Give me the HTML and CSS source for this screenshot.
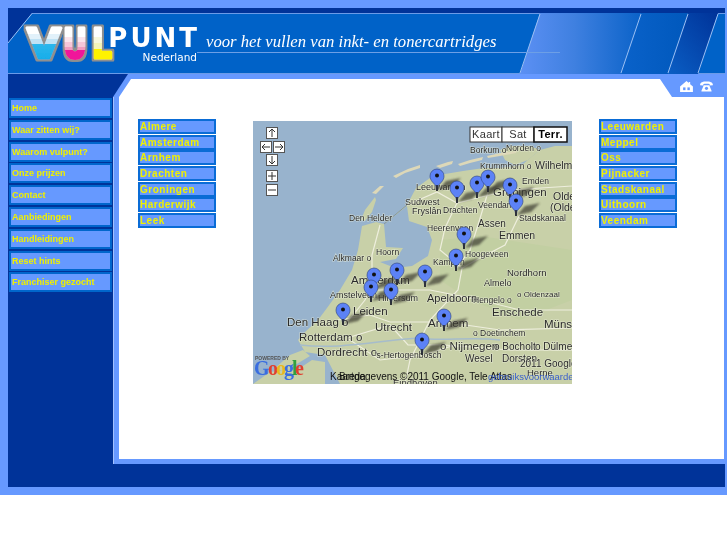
FILE: index.html
```html
<!DOCTYPE html>
<html lang="nl">
<head>
<meta charset="utf-8">
<title>Vulpunt Nederland</title>
<link rel="stylesheet" href="styles.css">
</head>
<body>
<div class="page">
  <div class="frame">
    <header class="header">
      <svg class="banner" viewBox="8 13 717 61" preserveAspectRatio="none" aria-hidden="true">
        <defs>
          <linearGradient id="p1" x1="0" x2="1" y1="0" y2="0"><stop offset="0" stop-color="#5c90f4"/><stop offset=".45" stop-color="#3f80e0"/><stop offset="1" stop-color="#0a62c8"/></linearGradient>
          <linearGradient id="p3" x1="0" x2="1" y1="1" y2="0"><stop offset="0" stop-color="#0a5ec4"/><stop offset="1" stop-color="#003399"/></linearGradient>
          <linearGradient id="p2" x1="0" x2="1" y1="0" y2="0"><stop offset="0" stop-color="#0a62ca"/><stop offset="1" stop-color="#0058bc"/></linearGradient>
        </defs>
        <polygon points="540,13 641,13 621,74 520,74" fill="url(#p1)"/>
        <polygon points="641,13 688,13 668,74 621,74" fill="url(#p2)"/>
        <polygon points="688,13 718,13 698,74 668,74" fill="url(#p3)"/>
        <polygon points="8,13 32,13 8,43" fill="#003399"/>
        <g stroke="#9cc0f4" stroke-width="1" fill="none">
          <path d="M8 43 L32 13.500"/>
          <path d="M540 14 L520 73"/><path d="M641 14 L621 73"/><path d="M688 14 L668 73"/><path d="M718 14 L698 73"/>
          <path d="M197 52.500 H560" stroke="#6d9fe6"/>
        </g>
      </svg>
      <div class="brand">
        <svg class="vul" viewBox="0 0 90 36" role="img" aria-label="VUL">
          <defs>
            <linearGradient id="gv" gradientUnits="userSpaceOnUse" x1="0" x2="0" y1="2" y2="33"><stop offset="0" stop-color="#fff"/><stop offset=".2" stop-color="#fff"/><stop offset=".2" stop-color="#e2f1fa"/><stop offset=".36" stop-color="#e2f1fa"/><stop offset=".36" stop-color="#bfe2f5"/><stop offset=".52" stop-color="#bfe2f5"/><stop offset=".52" stop-color="#2bb6ec"/><stop offset="1" stop-color="#18aeea"/></linearGradient>
            <linearGradient id="gu" gradientUnits="userSpaceOnUse" x1="0" x2="0" y1="2" y2="33"><stop offset="0" stop-color="#fff"/><stop offset=".3" stop-color="#fff"/><stop offset=".3" stop-color="#fbe4ec"/><stop offset=".46" stop-color="#fbe4ec"/><stop offset=".46" stop-color="#f6c6d8"/><stop offset=".6" stop-color="#f6c6d8"/><stop offset=".6" stop-color="#f29cc0"/><stop offset=".72" stop-color="#f29cc0"/><stop offset=".72" stop-color="#f0169a"/><stop offset="1" stop-color="#f0169a"/></linearGradient>
            <linearGradient id="gl" gradientUnits="userSpaceOnUse" x1="0" x2="0" y1="2" y2="33"><stop offset="0" stop-color="#fff"/><stop offset=".3" stop-color="#fff"/><stop offset=".3" stop-color="#f8f8dc"/><stop offset=".5" stop-color="#f8f8dc"/><stop offset=".5" stop-color="#f4f4b8"/><stop offset=".68" stop-color="#f4f4b8"/><stop offset=".68" stop-color="#fff200"/><stop offset="1" stop-color="#fff200"/></linearGradient>
            <filter id="edge" x="-10%" y="-10%" width="120%" height="120%">
              <feMorphology in="SourceAlpha" operator="dilate" radius="1.500" result="fat"/>
              <feFlood flood-color="#8f8f8f"/>
              <feComposite in2="fat" operator="in" result="rim"/>
              <feMerge><feMergeNode in="rim"/><feMergeNode in="SourceGraphic"/></feMerge>
            </filter>
          </defs>
          <g class="vul-text" filter="url(#edge)">
            <text x="2" y="31.500" fill="url(#gv)" stroke="url(#gv)" textLength="34" lengthAdjust="spacingAndGlyphs">V</text>
            <text x="38" y="31.500" fill="url(#gu)" stroke="url(#gu)" textLength="24" lengthAdjust="spacingAndGlyphs">U</text>
            <text x="67" y="31.500" fill="url(#gl)" stroke="url(#gl)" textLength="20" lengthAdjust="spacingAndGlyphs">L</text>
          </g>
        </svg>
        <div class="wordmark">
          <span class="punt">PUNT</span>
          <span class="land">Nederland</span>
        </div>
      </div>
      <p class="tagline">voor het vullen van inkt- en tonercartridges</p>
    </header>
    <div class="body">
      <nav class="side">
        <a class="side-link">Home</a>
        <a class="side-link">Waar zitten wij?</a>
        <a class="side-link">Waarom vulpunt?</a>
        <a class="side-link">Onze prijzen</a>
        <a class="side-link">Contact</a>
        <a class="side-link">Aanbiedingen</a>
        <a class="side-link">Handleidingen</a>
        <a class="side-link">Reset hints</a>
        <a class="side-link">Franchiser gezocht</a>
      </nav>
      <main class="main">
        <div class="tools">
          <svg class="tool" viewBox="0 0 14 12" aria-label="Home" role="img"><path d="M7 0 L9.500 2.200 V1 H11 V3.600 L14 6 V12 H0 V6 Z" fill="#fff"/><rect x="3.300" y="7" width="2.600" height="3" fill="#6699ff"/><rect x="8" y="7" width="2.600" height="3" fill="#6699ff"/></svg>
          <svg class="tool" viewBox="0 0 14 12" aria-label="Telefoon" role="img"><path d="M0 4.500 C0 1 3.500 .5 7 .5 S14 1 14 4.500 L10.500 5 V3.500 C9 2.800 5 2.800 3.500 3.500 V5 Z" fill="#fff"/><path d="M4 4.500 H10 L12.500 10.500 V11.500 H1.500 V10.500 Z" fill="#fff"/><circle cx="7" cy="8" r="1.700" fill="#6699ff"/></svg>
        </div>
        <div class="panel">
          <ul class="cities">
            <li>Almere</li><li>Amsterdam</li><li>Arnhem</li><li>Drachten</li><li>Groningen</li><li>Harderwijk</li><li>Leek</li>
          </ul>
          <svg class="map" viewBox="253 121 319 263" role="img" aria-label="Kaart van Nederland">
            <defs>
              <filter id="soft" x="-20%" y="-40%" width="140%" height="180%"><feGaussianBlur stdDeviation="1"/></filter>
              <g id="pin">
                <polygon points="1,-1 9,-10 24,-13 15,-4" fill="#3c3c30" opacity=".7" filter="url(#soft)"/>
                <path d="M0 0 L-1 -5 C-3 -8 -7 -10 -7 -15 A7 7 0 1 1 7 -15 C7 -10 3 -8 1 -5 Z" fill="#5c82f6" stroke="#2c3f78" stroke-width=".6"/>
                <path d="M-.8 0 L-.8 -6 H.8 L.8 0 Z" fill="#222"/>
                <circle cx="0" cy="-15.500" r="2" fill="#111"/>
              </g>
              <g id="ctl"><rect x="-5.500" y="-5.500" width="11" height="11" fill="#fff" stroke="#555"/></g>
            </defs>
            <rect x="253" y="121" width="319" height="263" fill="#98b3cd"/>
            <polygon class="land-a" points="572,146 555,146 540,150 530,158 522,165 500,168 484,168 463,171 445,174 430,178 416,188 407,205 384,224 376,222 362,226 358,250 352,270 340,290 327,308 318,320 305,332 298,340 305,352 325,355 340,384 572,384"/>
            <polygon class="land-a" points="500,150 512,146 530,146 540,150 528,160 515,165 505,160"/>
            <polygon class="sea" points="384,224 407,206 409,221 427,227 432,240 428,256 412,266 395,268 380,262 396,259 403,248 386,247"/>
            <polygon class="land-b" points="440,240 480,236 572,250 572,300 520,320 470,300 440,280"/>
            <polygon class="land-a" points="275,368 290,355 303,350 310,356 295,365 285,372"/>
            <polygon class="land-a" points="253,384 270,372 300,368 312,360 325,362 325,384"/>
            <polygon class="land-a" points="375,197 365,210 361,220 365,221 372,212 376,200"/>
            <g fill="#ddd8b8">
              <polygon points="372,193 380,186 384,186 376,194"/>
              <polygon points="393,176 408,169 420,165 420,168 405,173 396,178"/>
              <polygon points="436,166 448,162 453,161 452,164 440,168"/>
              <polygon points="458,164 470,160 483,157 482,160 470,163 460,166"/>
              <polygon points="487,156 500,153 517,151 516,153 500,156 488,158"/>
            </g>
            <path class="dike" d="M384 224 L407 205"/>
            <g class="roads">
              <path d="M407 205 L437 192 L457 203 L477 198 L510 190 L572 186"/>
              <path d="M457 203 L445 228 L440 250 L462 268 L458 290 L430 320 L410 360 L405 384"/>
              <path d="M488 192 L478 225 L470 250 L455 270"/>
              <path d="M519 216 L505 245 L480 258 L462 268"/>
              <path d="M370 290 L392 290 L430 290 L480 300 L520 310 L572 310"/>
              <path d="M338 320 L370 315 L390 322 L445 322 L500 330 L572 328"/>
              <path d="M345 325 L365 300 L372 284 L372 255 L380 225"/>
              <path d="M347 338 L390 325 L408 345 L444 345 L510 350 L572 350"/>
              <path d="M347 338 L380 360 L423 355 L455 345"/>
            </g>
            <g class="rivers">
              <path d="M420 338 C440 342 470 336 500 340"/>
              <path d="M300 345 C340 350 380 340 420 338"/>
            </g>
            <g class="lbl">
              <text x="470" y="153" font-size="8.500">Borkum o</text><text x="506" y="151" font-size="8.500">Norden o</text>
              <text x="480" y="169" font-size="8.500">Krummhorn o</text><text x="535" y="169" font-size="10.500">Wilhelmsh</text>
              <text x="522" y="184" font-size="8.500">Emden</text><text x="416" y="190" font-size="9">Leeuwarden</text>
              <text x="493" y="196" font-size="11.500">Groningen</text><text x="553" y="200" font-size="10.500">Olde</text><text x="550" y="211" font-size="10.500">(Olde</text>
              <text x="405" y="205" font-size="9">Sudwest</text><text x="412" y="214" font-size="9">Fryslân</text>
              <text x="443" y="213" font-size="8.500">Drachten</text><text x="478" y="208" font-size="8.500">Veendam</text>
              <text x="519" y="221" font-size="8.500">Stadskanaal</text><text x="349" y="221" font-size="8.500">Den Helder</text>
              <text x="427" y="231" font-size="8.500">Heerenveen</text><text x="478" y="227" font-size="10">Assen</text><text x="499" y="239" font-size="10.500">Emmen</text>
              <text x="376" y="255" font-size="8.500">Hoorn</text><text x="333" y="261" font-size="8.500">Alkmaar o</text>
              <text x="465" y="257" font-size="8.500">Hoogeveen</text><text x="433" y="265" font-size="8.500">Kampen</text>
              <text x="507" y="276" font-size="9.500">Nordhorn</text><text x="484" y="286" font-size="9">Almelo</text><text x="517" y="297" font-size="8">o Oldenzaal</text>
              <text x="473" y="303" font-size="8.500">Hengelo o</text><text x="427" y="302" font-size="11">Apeldoorn</text><text x="492" y="316" font-size="11.500">Enschede</text>
              <text x="544" y="328" font-size="11.500">Münster</text><text x="351" y="284" font-size="11.500">Amsterdam</text><text x="330" y="298" font-size="9">Amstelveen</text>
              <text x="378" y="301" font-size="9">Hilversum</text><text x="353" y="315" font-size="11.500">Leiden</text><text x="287" y="326" font-size="11.500">Den Haag o</text>
              <text x="375" y="331" font-size="11.500">Utrecht</text><text x="428" y="327" font-size="11.500">Arnhem</text><text x="299" y="341" font-size="11.500">Rotterdam o</text>
              <text x="473" y="336" font-size="8.500">o Doetinchem</text><text x="317" y="356" font-size="11.500">Dordrecht o</text><text x="440" y="350" font-size="11.500">o Nijmegen</text>
              <text x="494" y="350" font-size="10">o Bocholt</text><text x="535" y="350" font-size="10">o Dülmen</text><text x="375" y="358" font-size="8.500">'s-Hertogenbosch</text>
              <text x="465" y="362" font-size="10">Wesel</text><text x="502" y="362" font-size="10">Dorsten</text>
              <text x="520" y="367" font-size="10">2011 Google -</text><text x="527" y="376" font-size="9.500">Herne</text>
              <text x="393" y="386" font-size="9.500">Eindhoven</text>
            </g>
            <text x="339" y="380" class="copy">Breda</text>
            <text x="330" y="380" class="copy">Kaartgegevens ©2011 Google, Tele Atlas</text>
            <text x="488" y="380" class="terms">gebruiksvoorwaarden</text>
            <text x="255" y="360" class="powered">POWERED BY</text>
            <g class="goog">
              <text x="254" y="375" fill="#3a6ee0">G</text><text x="268" y="375" fill="#e04030">o</text><text x="276" y="375" fill="#e8b820">o</text><text x="284" y="375" fill="#3a6ee0">g</text><text x="292" y="375" fill="#30a040">l</text><text x="295" y="375" fill="#e04030">e</text>
            </g>
            <use href="#pin" x="437" y="191"/><use href="#pin" x="457" y="203"/><use href="#pin" x="477" y="198"/><use href="#pin" x="488" y="192"/>
            <use href="#pin" x="510" y="200"/><use href="#pin" x="516" y="216"/><use href="#pin" x="464" y="249"/><use href="#pin" x="456" y="271"/>
            <use href="#pin" x="374" y="290"/><use href="#pin" x="397" y="285"/><use href="#pin" x="425" y="287"/><use href="#pin" x="371" y="302"/>
            <use href="#pin" x="391" y="305"/><use href="#pin" x="343" y="325"/><use href="#pin" x="444" y="331"/><use href="#pin" x="422" y="355"/>
            <use href="#ctl" x="272" y="133"/><use href="#ctl" x="266" y="147"/><use href="#ctl" x="279" y="147"/><use href="#ctl" x="272" y="160"/><use href="#ctl" x="272" y="176"/><use href="#ctl" x="272" y="190"/>
            <g class="arrows">
              <path d="M272 137 V129 M269 132 L272 129 L275 132"/>
              <path d="M270 147 H262 M265 144 L262 147 L265 150"/>
              <path d="M275 147 H283 M280 144 L283 147 L280 150"/>
              <path d="M272 156 V164 M269 161 L272 164 L275 161"/>
              <path d="M268 176 H276 M272 172 V180"/>
              <path d="M268 190 H276"/>
            </g>
            <g class="mt">
              <rect x="470" y="127" width="32" height="15"/><rect x="502" y="127" width="32" height="15"/><rect x="534" y="127" width="33" height="15" class="on"/>
              <text x="486" y="138">Kaart</text><text x="518" y="138">Sat</text><text x="550.500" y="138" class="on-t">Terr.</text>
            </g>
          </svg>
          <ul class="cities right">
            <li>Leeuwarden</li><li>Meppel</li><li>Oss</li><li>Pijnacker</li><li>Stadskanaal</li><li>Uithoorn</li><li>Veendam</li>
          </ul>
        </div>
      </main>
    </div>
  </div>
</div>
</body>
</html>
```
FILE: styles.css
```css
* { box-sizing: border-box; }
html, body { margin: 0; background: #fff; }
.page { height: 495px; background: #6699ff; padding: 8px 2px 8px 8px; overflow: hidden; }
.frame { height: 479px; background: #003399; padding-top: 5px; display: flex; flex-direction: column; }
.header { position: relative; height: 61px; flex: none; background: #0062c8; border-top: 1px solid #6a9be8; border-bottom: 1px solid #6a9be8; display: flex; align-items: flex-start; }
.banner { position: absolute; left: 0; top: -1px; width: 100%; height: 61px; }
.brand { position: relative; display: flex; margin: 12px 0 0 17px; width: 172px; filter: blur(.4px); }
.vul { width: 90px; height: 36px; flex: none; overflow: visible; }
.vul-text text { font: 700 41px "DejaVu Sans", sans-serif; stroke-width: 3px; stroke-linejoin: round; }
.wordmark { display: flex; flex-direction: column; align-items: flex-end; margin-left: -9px; flex: 1; position: relative; }
.punt { font: 700 26px/24px "DejaVu Sans", sans-serif; color: #fff; letter-spacing: 3px; margin-right: -3px; }
.land { font: 400 10.500px/12px "DejaVu Sans", sans-serif; color: #fff; margin-top: 1px; }
.tagline { position: relative; margin: 17px 0 0 9px; font: italic 400 16.700px/22px "Liberation Serif", serif; color: #fff; white-space: nowrap; filter: blur(.3px); }
.body { flex: 1; display: flex; min-height: 0; }
.side { width: 105px; flex: none; padding: 24px 0 0 1px; display: flex; flex-direction: column; filter: blur(.35px); }
.side-link { display: flex; align-items: center; height: 20px; margin-bottom: 1.800px; width: 103px; padding-left: 1px; background: #6699ff; border: 2px solid #0066cc; color: #f0f000; font: 700 9px "Liberation Sans", sans-serif; white-space: nowrap; }
.main { position: relative; flex: 1; margin-bottom: 23px; background: #6699ff; padding: 5px 1px 5px 6px; clip-path: polygon(0 23px, 15px 0, 100% 0, 100% 100%, 0 100%); }
.main::before { content: ""; position: absolute; left: 0; top: 23px; bottom: 0; width: 1px; background: #a3c2ff; }
.panel { height: 100%; background: #fff; padding-top: 40px; display: flex; align-items: flex-start; clip-path: polygon(0 18px, 12px 0, 541px 0, 553px 18px, 100% 18px, 100% 100%, 0 100%); }
.tools { position: absolute; right: 12px; top: 7px; display: flex; gap: 7px; }
.tool { width: 13px; height: 11px; display: block; }
.cities { list-style: none; margin: 0 37px 0 19px; padding: 0; width: 78px; flex: none; filter: blur(.35px); }
.cities.right { margin: 0 0 0 27px; }
.cities li { height: 15px; margin-bottom: 0.700px; background: #6699ff; border: 2px solid #0a6cd6; color: #f0f000; font: 700 10px/11px "Liberation Sans", sans-serif; letter-spacing: 0.500px; white-space: nowrap; }
.map { width: 319px; height: 263px; flex: none; margin-top: 2px; display: block; font-family: "Liberation Sans", sans-serif; filter: blur(.45px); }
.land-a { fill: #c8d0a8; }
.land-b { fill: #c2cfa2; }
.sea { fill: #98b3cd; }
.dike { fill: none; stroke: #8a9a9a; stroke-width: 1px; }
.roads path { fill: none; stroke: #eeeedd; stroke-width: 1.200px; }
.rivers path { fill: none; stroke: #a6bccb; stroke-width: 1.500px; }
.lbl text { fill: #2a2a2a; stroke: rgba(240,244,225,.6); stroke-width: 1.200px; paint-order: stroke; }
.copy { font-size: 10px; fill: #111; }
.terms { font-size: 9.500px; fill: #3a5fcc; }
.powered { font-size: 5px; fill: #555; font-weight: 700; }
.goog text { font: 700 20px "Liberation Serif", serif; }
.arrows path { fill: none; stroke: #333; stroke-width: 1px; }
.mt rect { fill: #fff; stroke: #333; stroke-width: 1px; }
.mt text { font-size: 11px; text-anchor: middle; fill: #333; letter-spacing: .3px; }
.mt .on-t { font-weight: 700; fill: #000; }
.mt rect.on { stroke: #111; stroke-width: 1.500px; }
```
